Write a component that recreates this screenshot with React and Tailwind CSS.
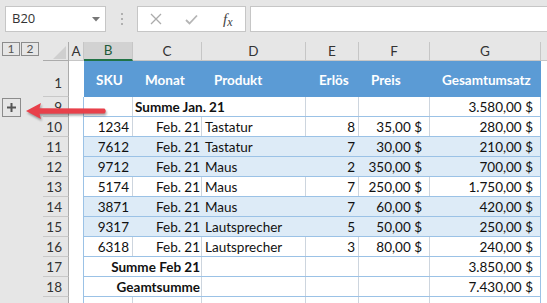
import React from 'react';

const W = { B: 'w-[49px]', C: 'w-[69px]', D: 'w-[104px]', E: 'w-[53px]', F: 'w-[71px]', G: 'w-[111px]' };

const rows = [
  { n: '9', band: false, lines: [1, 0, 1, 1, 1], C: { t: 'Summe Jan. 21', b: true, left: true }, G: '3.580,00 $' },
  { n: '10', band: false, lines: [1, 1, 1, 1, 1], B: '1234', C: 'Feb. 21', D: 'Tastatur', E: '8', F: '35,00 $', G: '280,00 $' },
  { n: '11', band: true, lines: [0, 0, 0, 0, 0], B: '7612', C: 'Feb. 21', D: 'Tastatur', E: '7', F: '30,00 $', G: '210,00 $' },
  { n: '12', band: true, lines: [0, 0, 0, 0, 0], B: '9712', C: 'Feb. 21', D: 'Maus', E: '2', F: '350,00 $', G: '700,00 $' },
  { n: '13', band: false, lines: [1, 1, 1, 1, 1], B: '5174', C: 'Feb. 21', D: 'Maus', E: '7', F: '250,00 $', G: '1.750,00 $' },
  { n: '14', band: true, lines: [0, 0, 0, 0, 0], B: '3871', C: 'Feb. 21', D: 'Maus', E: '7', F: '60,00 $', G: '420,00 $' },
  { n: '15', band: true, lines: [0, 0, 0, 0, 0], B: '9317', C: 'Feb. 21', D: 'Lautsprecher', E: '5', F: '50,00 $', G: '250,00 $' },
  { n: '16', band: false, lines: [1, 1, 1, 1, 1], B: '6318', C: 'Feb. 21', D: 'Lautsprecher', E: '3', F: '80,00 $', G: '240,00 $' },
  { n: '17', band: false, lines: [0, 1, 1, 1, 1], C: { t: 'Summe Feb 21', b: true }, G: '3.850,00 $' },
  { n: '18', band: false, lines: [0, 1, 1, 1, 1], C: { t: 'Geamtsumme', b: true }, G: '7.430,00 $' },
  { n: '', band: false, lines: [1, 1, 1, 1, 1] },
];

const Cell = ({ w, line, right, pad, children, bold, blue }) => (
  <div
    className={`${w} h-full shrink-0 flex items-center pt-[2px] ${right ? 'justify-end' : 'justify-start'} ${pad} ${
      blue ? 'border-r border-[#9bc2e6]' : line ? 'border-r border-[#cdd5de]' : 'border-r border-transparent'
    }`}
  >
    {children ? (
      <span className={`whitespace-nowrap shrink-0 ${bold ? 'font-bold' : ''}`}>{children}</span>
    ) : null}
  </div>
);

const DataRow = ({ r }) => {
  const c = typeof r.C === 'object' ? r.C : { t: r.C };
  return (
    <div className="flex h-[20px]">
      <div className="w-[43px] shrink-0 flex items-center">
        {r.n === '9' && (
          <div className="ml-[2px] w-[19px] h-[19px] border border-[#8c8c8c] flex items-center justify-center">
            <svg width="9" height="9" viewBox="0 0 9 9">
              <rect x="3.5" y="0" width="2" height="9" fill="#555" />
              <rect x="0" y="3.5" width="9" height="2" fill="#555" />
            </svg>
          </div>
        )}
      </div>
      <div className="w-[26px] shrink-0 flex items-center justify-end pr-[6px] pt-[1px] border-r border-b border-r-[#ababab] border-b-[#c8c8c8] text-[13.5px] text-[#333]">
        {r.n}
      </div>
      <div className="w-[15px] shrink-0 bg-white border-r border-[#9bc2e6]" />
      <div className={`flex border-b border-[#9bc2e6] ${r.band ? 'bg-[#ddebf7]' : 'bg-white'}`}>
        <Cell w={W.B} line={r.lines[0]} right pad="pr-[3px]">{r.B}</Cell>
        <Cell w={W.C} line={r.lines[1]} right={!c.left} pad={c.left ? 'pl-[2px]' : 'pr-[1px]'} bold={c.b}>
          {c.t}
        </Cell>
        <Cell w={W.D} line={r.lines[2]} pad="pl-[3px]">{r.D}</Cell>
        <Cell w={W.E} line={r.lines[3]} right pad="pr-[3px]">{r.E}</Cell>
        <Cell w={W.F} line={r.lines[4]} right pad="pr-[7px]">{r.F}</Cell>
        <Cell w={W.G} blue right pad="pr-[7px]">{r.G}</Cell>
      </div>
      <div className="flex-1 bg-white" />
    </div>
  );
};

const ColHead = ({ w, label, active }) => (
  <div
    className={`${w} shrink-0 flex items-center justify-center border-r border-[#c6c6c6] text-[13.5px] ${
      active ? 'bg-[#d2d2d2] text-[#1e5c3a] border-b-2 border-b-[#217346]' : 'text-[#333] border-b border-b-[#c6c6c6]'
    }`}
  >
    {label}
  </div>
);

export default function App() {
  const heads = [
    ['B', 'SKU'],
    ['C', 'Monat'],
    ['D', 'Produkt'],
    ['E', 'Erlös'],
    ['F', 'Preis'],
    ['G', 'Gesamtumsatz'],
  ];

  return (
    <div className="relative w-[547px] h-[303px] overflow-hidden bg-[#e6e6e6] font-[Lato,sans-serif] text-[#111]">
      {/* formula bar */}
      <div className="flex h-[42px] items-start pt-[6px]">
        <div className="ml-[5px] w-[101px] h-[26px] bg-white border border-[#c6c6c6] flex items-center justify-between pl-[6px] pr-[5px]">
          <span className="font-['Open_Sans',sans-serif] text-[13px] text-[#333]">B20</span>
          <svg width="8" height="5" viewBox="0 0 8 5">
            <polygon points="0,0 8,0 4,4.5" fill="#777" />
          </svg>
        </div>
        <div className="w-[31px] h-[26px] flex flex-col items-center justify-center gap-[3px]">
          <span className="w-[2px] h-[2px] bg-[#b0b0b0]" />
          <span className="w-[2px] h-[2px] bg-[#b0b0b0]" />
          <span className="w-[2px] h-[2px] bg-[#b0b0b0]" />
        </div>
        <div className="w-[109px] h-[26px] bg-white border border-[#c6c6c6] flex items-center">
          <svg className="ml-[12px]" width="12" height="12" viewBox="0 0 12 12">
            <path d="M1 1 L11 11 M11 1 L1 11" stroke="#ababab" strokeWidth="1.3" />
          </svg>
          <svg className="ml-[23px]" width="13" height="11" viewBox="0 0 13 11">
            <path d="M1 6 L4.5 9.5 L12 1.5" stroke="#b5b5b5" strokeWidth="1.8" fill="none" />
          </svg>
          <span className="ml-[25px] font-['Liberation_Serif',serif] italic text-[15px] text-[#444] leading-none">
            f<span className="text-[12px] relative top-[2px]">x</span>
          </span>
        </div>
        <div className="ml-[4px] flex-1 h-[26px] bg-white border border-r-0 border-[#c6c6c6]" />
      </div>

      {/* column headers */}
      <div className="flex h-[19px]">
        <div className="w-[43px] shrink-0 flex items-start">
          <div className="ml-[2px] flex h-[14px]">
            <div className="w-[18px] h-[14px] border border-[#8c8c8c] flex items-center justify-center text-[12px] text-[#555]">1</div>
            <div className="ml-[1px] w-[18px] h-[14px] border border-[#8c8c8c] flex items-center justify-center text-[12px] text-[#555]">2</div>
          </div>
        </div>
        <div className="w-[26px] shrink-0 flex items-end justify-end pr-[2px] pb-[1px] border-r border-b border-r-[#ababab] border-b-[#ababab]">
          <svg width="13" height="13" viewBox="0 0 13 13">
            <polygon points="13,0 13,13 0,13" fill="#cfcfcf" />
          </svg>
        </div>
        <ColHead w="w-[15px]" label="A" />
        {heads.map(([k]) => (
          <ColHead key={k} w={W[k]} label={k} active={k === 'B'} />
        ))}
        <div className="flex-1 border-b border-[#c6c6c6]" />
      </div>

      {/* row 1: table header */}
      <div className="flex h-[36px]">
        <div className="w-[43px] shrink-0" />
        <div className="w-[26px] shrink-0 flex items-end justify-end pr-[6px] pb-[3px] border-r border-b border-r-[#ababab] border-b-[#c8c8c8] text-[13.5px] text-[#333]">
          1
        </div>
        <div className="w-[15px] shrink-0 bg-white" />
        <div className="flex bg-[#5b9bd5] text-white font-bold text-[13.5px]">
          {heads.map(([k, t]) => (
            <div key={k} className={`${W[k]} shrink-0 flex items-end pb-[7px] ${k === 'E' ? 'pl-[13px]' : 'pl-[12px]'}`}>
              <span className="whitespace-nowrap">{t}</span>
            </div>
          ))}
        </div>
        <div className="flex-1 bg-white" />
      </div>

      <div className="text-[13.5px]">
        {rows.map((r, i) => (
          <DataRow key={i} r={r} />
        ))}
      </div>

      {/* red pointer arrow */}
      <svg
        className="absolute left-[24px] top-[101px] drop-shadow-[1px_2px_1px_rgba(0,0,0,0.35)]"
        width="86"
        height="20"
        viewBox="0 0 86 20"
      >
        <path d="M2 10 L17 2 L15.5 7.3 L80.5 7.6 Q83 10 80.5 12.4 L15.5 12.7 L17 18 Z" fill="#e8404a" />
      </svg>
    </div>
  );
}
